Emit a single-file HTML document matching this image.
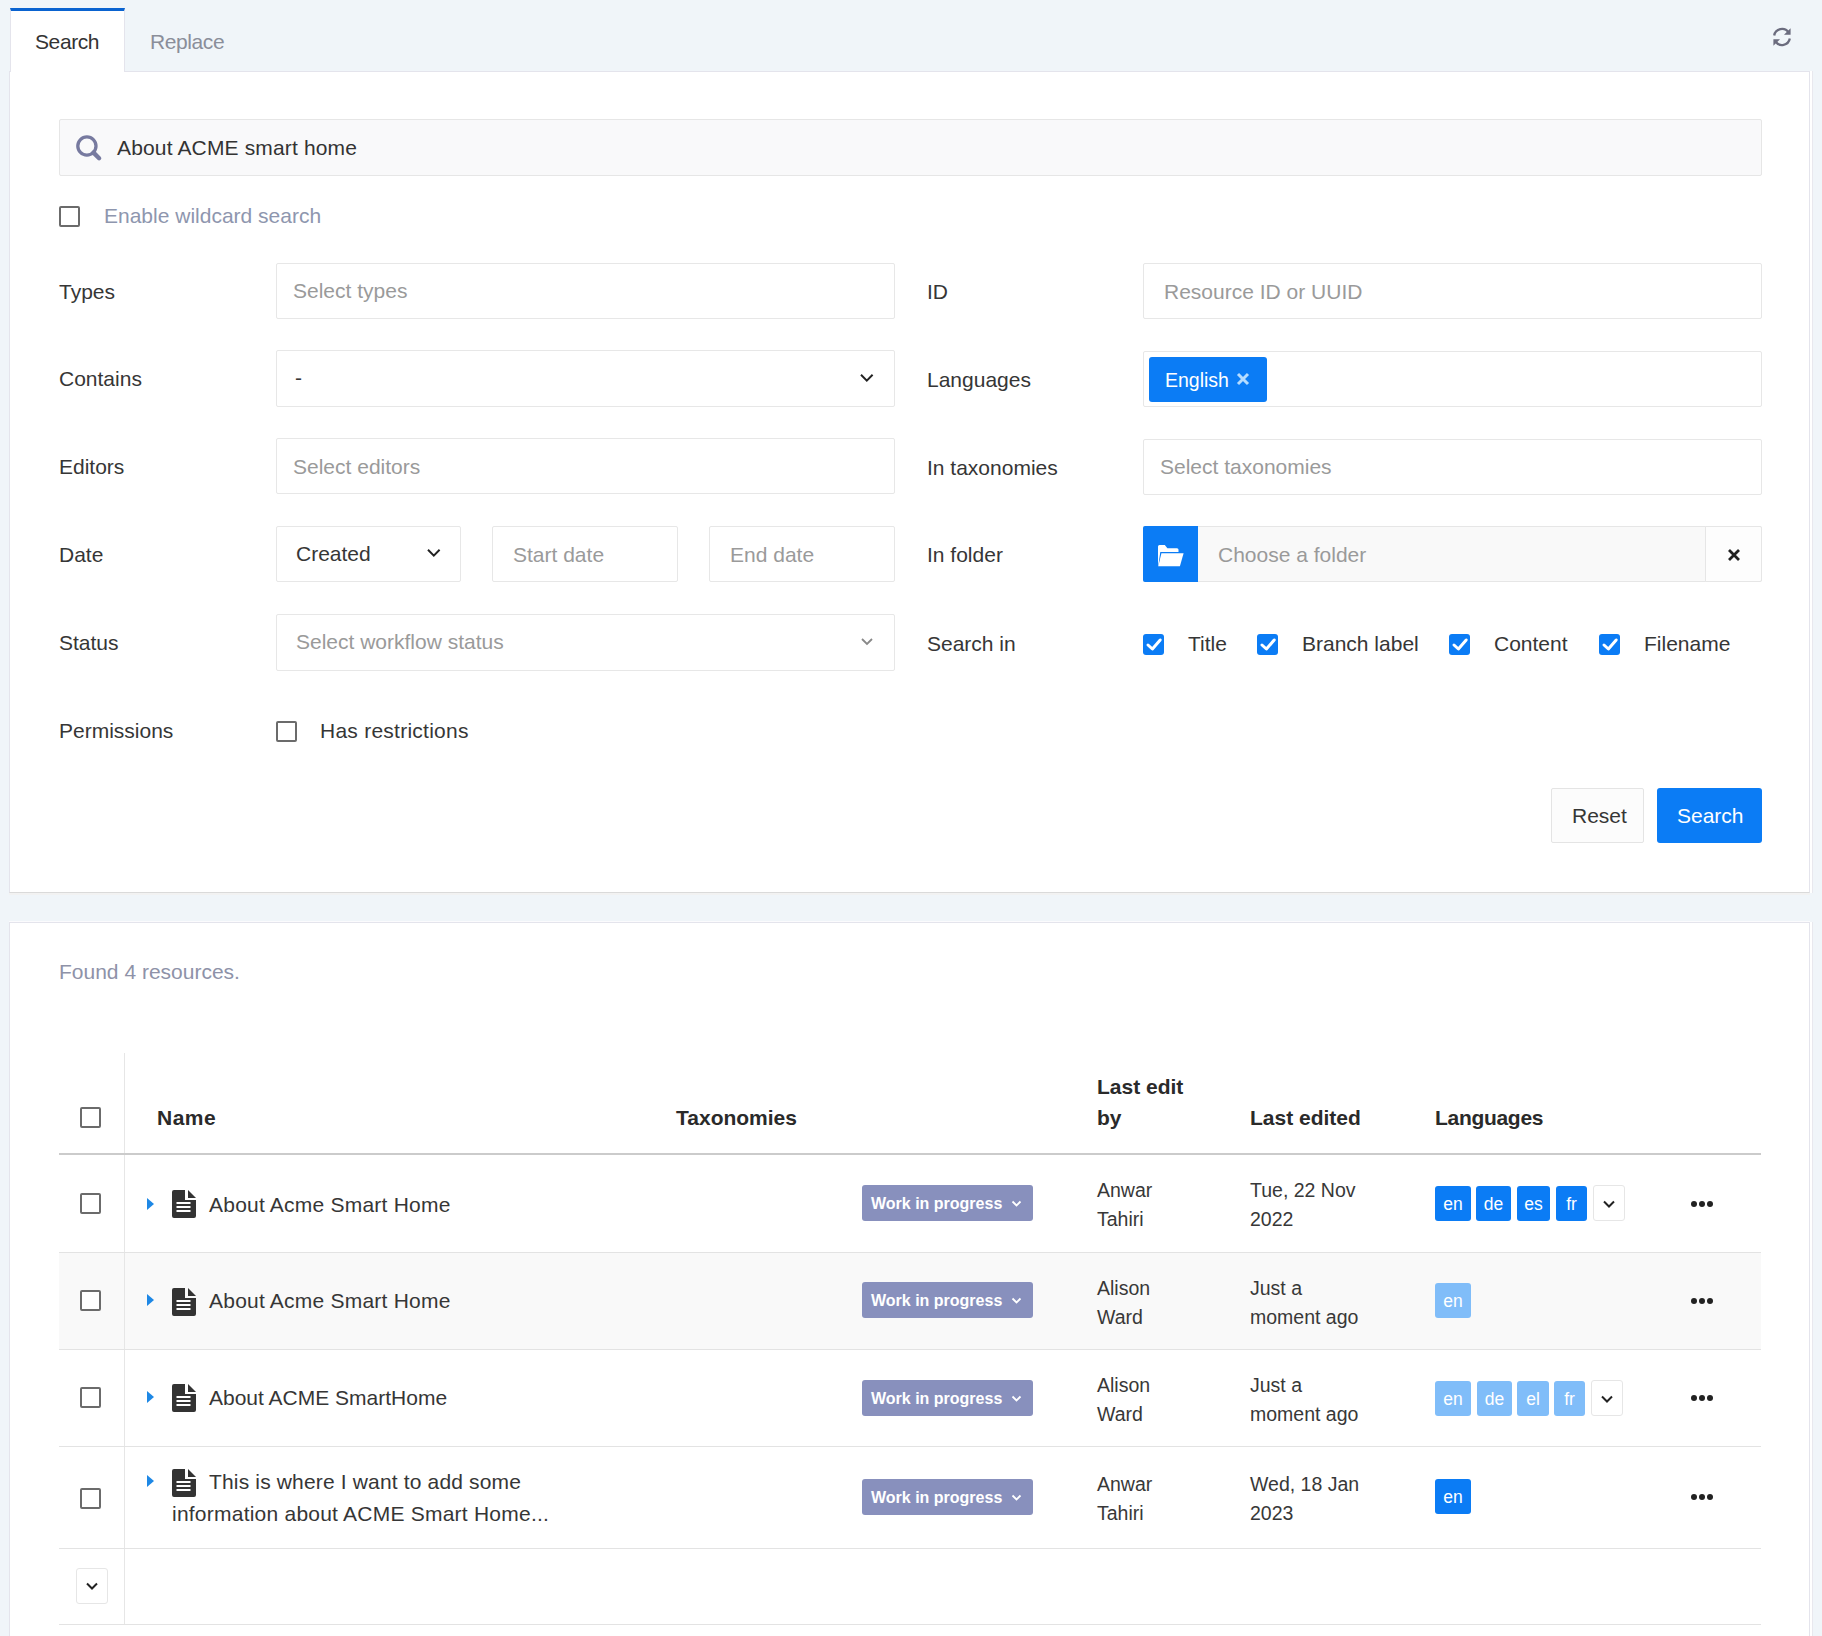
<!DOCTYPE html>
<html><head><meta charset="utf-8">
<style>
*{box-sizing:border-box;margin:0;padding:0}
html,body{width:1822px;height:1636px;overflow:hidden}
body{background:#f0f5f9;font-family:"Liberation Sans",sans-serif;font-size:21px;color:#363636;position:relative}
.a{position:absolute}
.t{position:absolute;white-space:nowrap;line-height:1;margin-top:-3px}
.panel{position:absolute;background:#fff;border:1px solid #e4e4ec}
.inp{position:absolute;background:#fff;border:1px solid #e7e7e7;border-radius:2px}
.ph{color:#9a9a9a}
.lbl{color:#363636}
.cb{position:absolute;width:21px;height:21px;border:2px solid #6b6b6b;border-radius:2px;background:#fff}
.cbc{position:absolute;width:21px;height:21px;border-radius:3px;background:#0b7cf5}
.btnb{background:#0b7cf5;color:#fff}
.hd{font-weight:bold;color:#2a2a2a}
.row{position:absolute;left:59px;width:1702px;border-bottom:1px solid #e3e3e3}
.wip{position:absolute;left:862px;width:171px;height:36px;background:#8890bd;border-radius:3px;color:#fff;font-weight:bold;font-size:16px}
.chip{position:absolute;height:35px;border-radius:3px;color:#fff;font-size:17.5px;text-align:center;line-height:36px}
.dots{position:absolute;left:1691px;width:22px;height:6px}
.dots i{position:absolute;top:0;width:6px;height:6px;border-radius:50%;background:#222}
.cell{position:absolute;font-size:19.5px;line-height:29px;color:#383838;white-space:nowrap}
</style></head><body>

<!-- tabs -->
<div class="a" style="left:10px;top:8px;width:115px;height:64px;background:#fff;border-left:1px solid #e4e4ec;border-right:1px solid #e4e4ec;border-top:3px solid #0a63d0;z-index:2"></div>
<div class="t" style="left:35px;top:34px;color:#333;z-index:3;letter-spacing:-0.4px">Search</div>
<div class="t" style="left:150px;top:34px;color:#8a8e9a;letter-spacing:-0.4px">Replace</div>
<svg class="a" style="left:1770px;top:25px" width="24" height="24" viewBox="0 0 24 24"><path d="M4.2 10.5A7.9 7.9 0 0 1 18.6 7.6M19.8 13.5A7.9 7.9 0 0 1 5.4 16.4" fill="none" stroke="#6b6c7e" stroke-width="2.3"/><path d="M20.6 3.2v6.6h-6.6z M3.4 20.8v-6.6h6.6z" fill="#6b6c7e"/></svg>

<!-- panel 1 -->
<div class="panel" style="left:9px;top:71px;width:1801px;height:822px;border-bottom:1px solid #dadada;box-shadow:2px 0 0 #fff,3px 0 0 #e8e8ee,0 2px 0 #f2f2f2"></div>

<!-- search box -->
<div class="a" style="left:59px;top:119px;width:1703px;height:57px;background:#f9f9fa;border:1px solid #e6e6e6;border-radius:2px"></div>
<svg class="a" style="left:66px;top:126px" width="40" height="40" viewBox="0 0 40 40"><circle cx="20.9" cy="20" r="9.1" fill="none" stroke="#777a9f" stroke-width="3.3"/><path d="M27.5 26.6l5.6 5.6" stroke="#777a9f" stroke-width="4.4" stroke-linecap="round"/></svg>
<div class="t" style="left:117px;top:140px;color:#333;letter-spacing:0.15px">About ACME smart home</div>

<div class="cb" style="left:59px;top:206px"></div>
<div class="t" style="left:104px;top:208px;color:#8e96ae">Enable wildcard search</div>

<!-- left labels -->
<div class="t lbl" style="left:59px;top:284px">Types</div>
<div class="t lbl" style="left:59px;top:371px">Contains</div>
<div class="t lbl" style="left:59px;top:459px">Editors</div>
<div class="t lbl" style="left:59px;top:547px">Date</div>
<div class="t lbl" style="left:59px;top:635px">Status</div>
<div class="t lbl" style="left:59px;top:723px">Permissions</div>

<!-- left inputs -->
<div class="inp" style="left:276px;top:263px;width:619px;height:56px"></div>
<div class="t ph" style="left:293px;top:283px">Select types</div>
<div class="inp" style="left:276px;top:350px;width:619px;height:57px"></div>
<div class="t" style="left:295px;top:370px">-</div>
<svg class="a" style="left:859px;top:373px" width="16" height="10" viewBox="0 0 16 10"><path d="M2 1.8l5.8 5.8 5.8-5.8" fill="none" stroke="#222" stroke-width="2"/></svg>
<div class="inp" style="left:276px;top:438px;width:619px;height:56px"></div>
<div class="t ph" style="left:293px;top:459px">Select editors</div>

<div class="inp" style="left:276px;top:526px;width:185px;height:56px"></div>
<div class="t" style="left:296px;top:546px">Created</div>
<svg class="a" style="left:426px;top:548px" width="16" height="10" viewBox="0 0 16 10"><path d="M2 1.8l5.8 5.8 5.8-5.8" fill="none" stroke="#222" stroke-width="2"/></svg>
<div class="inp" style="left:492px;top:526px;width:186px;height:56px"></div>
<div class="t ph" style="left:513px;top:547px">Start date</div>
<div class="inp" style="left:709px;top:526px;width:186px;height:56px"></div>
<div class="t ph" style="left:730px;top:547px">End date</div>

<div class="inp" style="left:276px;top:614px;width:619px;height:57px"></div>
<div class="t ph" style="left:296px;top:634px">Select workflow status</div>
<svg class="a" style="left:860px;top:637px" width="14" height="9" viewBox="0 0 14 9"><path d="M2 2l5 5 5-5" fill="none" stroke="#888" stroke-width="1.8"/></svg>

<div class="cb" style="left:276px;top:721px"></div>
<div class="t" style="left:320px;top:723px;letter-spacing:0.25px">Has restrictions</div>

<!-- right labels -->
<div class="t lbl" style="left:927px;top:284px">ID</div>
<div class="t lbl" style="left:927px;top:372px">Languages</div>
<div class="t lbl" style="left:927px;top:460px">In taxonomies</div>
<div class="t lbl" style="left:927px;top:547px">In folder</div>
<div class="t lbl" style="left:927px;top:636px">Search in</div>

<div class="inp" style="left:1143px;top:263px;width:619px;height:56px"></div>
<div class="t ph" style="left:1164px;top:284px">Resource ID or UUID</div>
<div class="inp" style="left:1143px;top:351px;width:619px;height:56px"></div>
<div class="a" style="left:1149px;top:357px;width:118px;height:45px;background:#0b7cf5;border-radius:3px"></div>
<div class="t" style="left:1165px;top:374px;color:#fff;font-size:19.5px">English</div>
<svg class="a" style="left:1236px;top:372px" width="14" height="14" viewBox="0 0 14 14"><path d="M2 2l10 10M12 2L2 12" stroke="#b5dcff" stroke-width="3"/></svg>
<div class="inp" style="left:1143px;top:439px;width:619px;height:56px"></div>
<div class="t ph" style="left:1160px;top:459px">Select taxonomies</div>

<div class="a" style="left:1143px;top:526px;width:619px;height:56px;background:#f9f9f9;border:1px solid #e6e6e6;border-radius:2px"></div>
<div class="a" style="left:1143px;top:526px;width:55px;height:56px;background:#0b7cf5;border-radius:2px 0 0 2px"></div>
<svg class="a" style="left:1157px;top:544px" width="28" height="24" viewBox="0 0 28 24"><path d="M1 2.5a1.5 1.5 0 0 1 1.5-1.5h5.3l2.6 3.2h9.6a1.5 1.5 0 0 1 1.5 1.5V8H3.3L1.2 22.2H1z" fill="#fff"/><path d="M4.4 9.2H26.6L22.9 22.2H1.3z" fill="#fff"/></svg>
<div class="t ph" style="left:1218px;top:547px">Choose a folder</div>
<div class="a" style="left:1705px;top:526px;width:57px;height:56px;background:#fdfdfd;border:1px solid #e6e6e6;border-radius:0 2px 2px 0"></div>
<svg class="a" style="left:1727px;top:548px" width="14" height="14" viewBox="0 0 14 14"><path d="M2 2l10 10M12 2L2 12" stroke="#222" stroke-width="2.8"/></svg>

<!-- search in -->
<div class="cbc" style="left:1143px;top:634px"><svg width="21" height="21" viewBox="0 0 21 21" style="position:absolute;left:0;top:0"><path d="M5 11l4.4 4L17.2 6" fill="none" stroke="#fff" stroke-width="3" stroke-linecap="round" stroke-linejoin="round"/></svg></div>
<div class="t" style="left:1188px;top:636px">Title</div>
<div class="cbc" style="left:1257px;top:634px"><svg width="21" height="21" viewBox="0 0 21 21" style="position:absolute;left:0;top:0"><path d="M5 11l4.4 4L17.2 6" fill="none" stroke="#fff" stroke-width="3" stroke-linecap="round" stroke-linejoin="round"/></svg></div>
<div class="t" style="left:1302px;top:636px">Branch label</div>
<div class="cbc" style="left:1449px;top:634px"><svg width="21" height="21" viewBox="0 0 21 21" style="position:absolute;left:0;top:0"><path d="M5 11l4.4 4L17.2 6" fill="none" stroke="#fff" stroke-width="3" stroke-linecap="round" stroke-linejoin="round"/></svg></div>
<div class="t" style="left:1494px;top:636px">Content</div>
<div class="cbc" style="left:1599px;top:634px"><svg width="21" height="21" viewBox="0 0 21 21" style="position:absolute;left:0;top:0"><path d="M5 11l4.4 4L17.2 6" fill="none" stroke="#fff" stroke-width="3" stroke-linecap="round" stroke-linejoin="round"/></svg></div>
<div class="t" style="left:1644px;top:636px">Filename</div>

<!-- buttons -->
<div class="a" style="left:1551px;top:788px;width:93px;height:55px;background:#fcfcfc;border:1px solid #e4e4e4;border-radius:2px"></div>
<div class="t" style="left:1572px;top:808px">Reset</div>
<div class="a" style="left:1657px;top:788px;width:105px;height:55px;background:#0b7cf5;border-radius:3px"></div>
<div class="t" style="left:1677px;top:808px;color:#fff">Search</div>

<!-- panel 2 -->
<div class="panel" style="left:9px;top:922px;width:1801px;height:800px;box-shadow:2px 0 0 #fff,3px 0 0 #e8e8ee,0 -1px 0 #fbfbfd"></div>
<div class="t" style="left:59px;top:964px;color:#8e92a8">Found 4 resources.</div>


<!-- table -->
<div class="a" style="left:124px;top:1053px;width:1px;height:572px;background:#e6e6e6"></div>
<div class="a" style="left:59px;top:1153px;width:1702px;height:2px;background:#cbcbcb"></div>
<div class="cb" style="left:80px;top:1107px"></div>
<div class="t hd" style="left:157px;top:1110px;letter-spacing:0.5px">Name</div>
<div class="t hd" style="left:676px;top:1110px">Taxonomies</div>
<div class="t hd" style="left:1097px;top:1079px">Last edit</div>
<div class="t hd" style="left:1097px;top:1110px">by</div>
<div class="t hd" style="left:1250px;top:1110px">Last edited</div>
<div class="t hd" style="left:1435px;top:1110px;letter-spacing:-0.3px">Languages</div>

<div class="a" style="left:59px;top:1253px;width:1702px;height:96px;background:#f9f9f9"></div>
<div class="a" style="left:59px;top:1252px;width:1702px;height:1px;background:#e3e3e3"></div>
<div class="a" style="left:59px;top:1349px;width:1702px;height:1px;background:#e3e3e3"></div>
<div class="a" style="left:59px;top:1446px;width:1702px;height:1px;background:#e3e3e3"></div>
<div class="a" style="left:59px;top:1548px;width:1702px;height:1px;background:#e3e3e3"></div>
<div class="a" style="left:59px;top:1624px;width:1702px;height:1px;background:#e3e3e3"></div>
<div class="a" style="left:124px;top:1253px;width:1px;height:96px;background:#e6e6e6"></div>
<div class="cb" style="left:80px;top:1193px"></div>
<svg class="a" style="left:147px;top:1198px" width="8" height="12" viewBox="0 0 8 12"><path d="M0 0l7 6-7 6z" fill="#1e88e5"/></svg>
<svg class="a doc" style="left:172px;top:1190px" width="24" height="28" viewBox="0 0 24 28"><path d="M2 0h11v10h11v16a2 2 0 0 1-2 2H2a2 2 0 0 1-2-2V2a2 2 0 0 1 2-2z" fill="#333"/><path d="M16 0l8 8h-8z" fill="#333"/><path d="M4.5 13h14M4.5 17h14M4.5 21h14" stroke="#fff" stroke-width="2.2"/></svg>
<div class="t" style="left:209px;top:1197px;letter-spacing:0.22px">About Acme Smart Home</div>
<div class="wip" style="top:1185px"><span class="t" style="left:9px;top:14px">Work in progress</span><svg class="a" style="left:149px;top:15px" width="11" height="8" viewBox="0 0 11 8"><path d="M1.5 1.5l4 4 4-4" fill="none" stroke="#fff" stroke-width="1.8"/></svg></div>
<div class="cell" style="left:1097px;top:1176px">Anwar<br>Tahiri</div>
<div class="cell" style="left:1250px;top:1176px">Tue, 22 Nov<br>2022</div>
<div class="chip" style="left:1435px;top:1186px;width:36px;background:#0b7cf5">en</div>
<div class="chip" style="left:1476px;top:1186px;width:35px;background:#0b7cf5">de</div>
<div class="chip" style="left:1517px;top:1186px;width:33px;background:#0b7cf5">es</div>
<div class="chip" style="left:1556px;top:1186px;width:31px;background:#0b7cf5">fr</div>
<div class="a" style="left:1593px;top:1185px;width:32px;height:36px;border:1px solid #e6e6e6;border-radius:3px;background:#fff"></div><svg class="a" style="left:1602px;top:1200px" width="14" height="8" viewBox="0 0 14 8"><path d="M2 1.5l5 5 5-5" fill="none" stroke="#222" stroke-width="2"/></svg>
<div class="dots" style="top:1201px"><i style="left:0"></i><i style="left:8px"></i><i style="left:16px"></i></div>
<div class="cb" style="left:80px;top:1290px"></div>
<svg class="a" style="left:147px;top:1294px" width="8" height="12" viewBox="0 0 8 12"><path d="M0 0l7 6-7 6z" fill="#1e88e5"/></svg>
<svg class="a doc" style="left:172px;top:1288px" width="24" height="28" viewBox="0 0 24 28"><path d="M2 0h11v10h11v16a2 2 0 0 1-2 2H2a2 2 0 0 1-2-2V2a2 2 0 0 1 2-2z" fill="#333"/><path d="M16 0l8 8h-8z" fill="#333"/><path d="M4.5 13h14M4.5 17h14M4.5 21h14" stroke="#fff" stroke-width="2.2"/></svg>
<div class="t" style="left:209px;top:1293px;letter-spacing:0.22px">About Acme Smart Home</div>
<div class="wip" style="top:1282px"><span class="t" style="left:9px;top:14px">Work in progress</span><svg class="a" style="left:149px;top:15px" width="11" height="8" viewBox="0 0 11 8"><path d="M1.5 1.5l4 4 4-4" fill="none" stroke="#fff" stroke-width="1.8"/></svg></div>
<div class="cell" style="left:1097px;top:1274px">Alison<br>Ward</div>
<div class="cell" style="left:1250px;top:1274px">Just a<br>moment ago</div>
<div class="chip" style="left:1435px;top:1283px;width:36px;background:#80bdf9">en</div>
<div class="dots" style="top:1298px"><i style="left:0"></i><i style="left:8px"></i><i style="left:16px"></i></div>
<div class="cb" style="left:80px;top:1387px"></div>
<svg class="a" style="left:147px;top:1391px" width="8" height="12" viewBox="0 0 8 12"><path d="M0 0l7 6-7 6z" fill="#1e88e5"/></svg>
<svg class="a doc" style="left:172px;top:1384px" width="24" height="28" viewBox="0 0 24 28"><path d="M2 0h11v10h11v16a2 2 0 0 1-2 2H2a2 2 0 0 1-2-2V2a2 2 0 0 1 2-2z" fill="#333"/><path d="M16 0l8 8h-8z" fill="#333"/><path d="M4.5 13h14M4.5 17h14M4.5 21h14" stroke="#fff" stroke-width="2.2"/></svg>
<div class="t" style="left:209px;top:1390px">About ACME SmartHome</div>
<div class="wip" style="top:1380px"><span class="t" style="left:9px;top:14px">Work in progress</span><svg class="a" style="left:149px;top:15px" width="11" height="8" viewBox="0 0 11 8"><path d="M1.5 1.5l4 4 4-4" fill="none" stroke="#fff" stroke-width="1.8"/></svg></div>
<div class="cell" style="left:1097px;top:1371px">Alison<br>Ward</div>
<div class="cell" style="left:1250px;top:1371px">Just a<br>moment ago</div>
<div class="chip" style="left:1435px;top:1381px;width:36px;background:#80bdf9">en</div>
<div class="chip" style="left:1477px;top:1381px;width:35px;background:#80bdf9">de</div>
<div class="chip" style="left:1517px;top:1381px;width:32px;background:#80bdf9">el</div>
<div class="chip" style="left:1554px;top:1381px;width:31px;background:#80bdf9">fr</div>
<div class="a" style="left:1591px;top:1380px;width:32px;height:36px;border:1px solid #e6e6e6;border-radius:3px;background:#fff"></div><svg class="a" style="left:1600px;top:1395px" width="14" height="8" viewBox="0 0 14 8"><path d="M2 1.5l5 5 5-5" fill="none" stroke="#222" stroke-width="2"/></svg>
<div class="dots" style="top:1395px"><i style="left:0"></i><i style="left:8px"></i><i style="left:16px"></i></div>
<div class="cb" style="left:80px;top:1488px"></div>
<svg class="a" style="left:147px;top:1475px" width="8" height="12" viewBox="0 0 8 12"><path d="M0 0l7 6-7 6z" fill="#1e88e5"/></svg>
<svg class="a doc" style="left:172px;top:1469px" width="24" height="28" viewBox="0 0 24 28"><path d="M2 0h11v10h11v16a2 2 0 0 1-2 2H2a2 2 0 0 1-2-2V2a2 2 0 0 1 2-2z" fill="#333"/><path d="M16 0l8 8h-8z" fill="#333"/><path d="M4.5 13h14M4.5 17h14M4.5 21h14" stroke="#fff" stroke-width="2.2"/></svg>
<div class="t" style="left:209px;top:1474px;letter-spacing:0.16px">This is where I want to add some</div>
<div class="t" style="left:172px;top:1506px;letter-spacing:0.23px">information about ACME Smart Home...</div>
<div class="wip" style="top:1479px"><span class="t" style="left:9px;top:14px">Work in progress</span><svg class="a" style="left:149px;top:15px" width="11" height="8" viewBox="0 0 11 8"><path d="M1.5 1.5l4 4 4-4" fill="none" stroke="#fff" stroke-width="1.8"/></svg></div>
<div class="cell" style="left:1097px;top:1470px">Anwar<br>Tahiri</div>
<div class="cell" style="left:1250px;top:1470px">Wed, 18 Jan<br>2023</div>
<div class="chip" style="left:1435px;top:1479px;width:36px;background:#0b7cf5">en</div>
<div class="dots" style="top:1494px"><i style="left:0"></i><i style="left:8px"></i><i style="left:16px"></i></div>
<div class="a" style="left:76px;top:1568px;width:32px;height:36px;border:1px solid #e6e6e6;border-radius:3px;background:#fff"></div>
<svg class="a" style="left:85px;top:1582px" width="14" height="8" viewBox="0 0 14 8"><path d="M2 1.5l5 5 5-5" fill="none" stroke="#222" stroke-width="2"/></svg>


</body></html>
